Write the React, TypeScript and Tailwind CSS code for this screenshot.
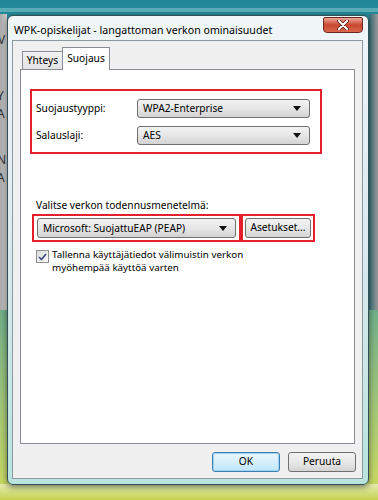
import React from 'react';

const font = { fontFamily: '"Noto Sans", "Open Sans", sans-serif' };

function Combo({ value, className }: { value: string; className: string }) {
  return (
    <div
      className={`flex items-center justify-between rounded-[3px] border border-[#707070] bg-gradient-to-b from-[#f3f3f3] via-[#e6e6e6] to-[#d3d3d3] pl-[5px] pr-[8px] text-[10.2px] text-black ${className}`}
    >
      <span className="leading-none">{value}</span>
      <svg width="8" height="5" viewBox="0 0 8 5">
        <path d="M0 0 L8 0 L4 5 Z" fill="#111" />
      </svg>
    </div>
  );
}

function Button({ label, primary, className }: { label: string; primary?: boolean; className: string }) {
  return (
    <div
      className={`flex items-center justify-center rounded-[3px] border text-[10.2px] text-black ${
        primary
          ? 'border-[#3c7fb1] bg-gradient-to-b from-[#eaf6fd] via-[#d7effc] to-[#bee6fd] shadow-[inset_0_0_0_1px_#9fd3f1]'
          : 'border-[#707070] bg-gradient-to-b from-[#f3f3f3] via-[#e8e8e8] to-[#d4d4d4]'
      } ${className}`}
    >
      {label}
    </div>
  );
}

export default function App() {
  return (
    <div
      className="relative w-[378px] h-[500px] overflow-hidden bg-gradient-to-b from-[#1f8898] via-[#4f9f90] to-[#cfdc5c] pt-[15px] pl-[7px]"
      style={font}
    >
      {/* desktop behind the dialog */}
      <div className="absolute left-0 top-[14px] w-[7px] h-[296px] bg-gradient-to-r from-[#a9a9a9] to-[#cfcfcf] text-[12px] text-[#333] leading-none">
        <span className="absolute left-[-2px] top-[20px]">V</span>
        <span className="absolute left-[-3px] top-[76px]">Y</span>
        <span className="absolute left-[-3px] top-[94px]">A</span>
        <span className="absolute left-[-3px] top-[140px]">N</span>
        <span className="absolute left-[-3px] top-[158px]">A</span>
      </div>
      <div className="absolute right-0 top-[14px] w-[9px] h-[296px] bg-gradient-to-r from-[#2f6f78] to-[#9a9898]" />
      <div className="absolute left-0 right-0 top-[8px] h-[4px] bg-[#7fc3cc] opacity-60" />
      <div className="absolute left-0 right-0 bottom-0 h-[16px] bg-gradient-to-b from-[#e4ecb0] to-[#c4d24a]" />

      {/* dialog window */}
      <div className="relative w-[362px] h-[470px] rounded-[6px] border border-[#33505a] bg-gradient-to-b from-[#f1f6f8] via-[#dbe9f0] to-[#b9e4dc] shadow-[0_2px_6px_rgba(0,0,0,0.5)] flex flex-col">
        {/* title bar */}
        <div className="relative h-[24px] flex items-center pl-[6px] pt-[5px] text-[10.6px] text-black">
          WPK-opiskelijat - langattoman verkon ominaisuudet
          <div className="absolute right-[5px] top-[1px] w-[40px] h-[16px] rounded-b-[4px] rounded-t-[2px] border border-[#6a2a20] bg-gradient-to-b from-[#e9a798] via-[#c9462f] to-[#d9694c] flex items-center justify-center">
            <svg width="12" height="10" viewBox="0 0 12 10">
              <path d="M2 1 L10 9 M10 1 L2 9" stroke="#5a1d14" strokeWidth="3.6" strokeLinecap="round" />
              <path d="M2 1 L10 9 M10 1 L2 9" stroke="#fff" strokeWidth="2" strokeLinecap="round" />
            </svg>
          </div>
        </div>

        {/* client area */}
        <div className="ml-[4px] w-[351px] h-[439px] border border-[#8a9aa0] bg-[#f0f0f0] pl-[7px] pr-[7px] flex flex-col text-[10.2px]">
          {/* tabs */}
          <div className="flex items-end h-[28px] pl-[2px] text-black">
            <div className="w-[40px] h-[18px] border border-b-0 border-r-0 border-[#898c95] bg-gradient-to-b from-[#f2f2f2] to-[#e3e3e3] flex items-center justify-center">
              Yhteys
            </div>
            <div className="relative z-10 w-[48px] h-[23px] -mb-px border border-b-0 border-[#898c95] bg-white flex justify-center pt-[3px]">
              Suojaus
            </div>
          </div>

          {/* tab panel */}
          <div className="h-[375px] border border-[#898c95] bg-white flex flex-col text-black">
            <div className="ml-[9px] mt-[19px] w-[292px] h-[65px] border-2 border-[#e3202b] flex flex-col gap-[8px] pt-[8px] pl-[4px]">
              <div className="flex items-center h-[19px]">
                <span className="w-[101px]">Suojaustyyppi:</span>
                <Combo value="WPA2-Enterprise" className="w-[173px] h-[19px]" />
              </div>
              <div className="flex items-center h-[19px]">
                <span className="w-[101px]">Salauslaji:</span>
                <Combo value="AES" className="w-[173px] h-[19px]" />
              </div>
            </div>

            <div className="ml-[15px] mt-[45px] leading-[13px]">Valitse verkon todennusmenetelmä:</div>

            <div className="flex mt-[2px] ml-[11px]">
              <div className="w-[209px] h-[28px] border-2 border-[#e3202b] p-[2px] pl-[3px]">
                <Combo value="Microsoft: SuojattuEAP (PEAP)" className="w-[199px] h-[20px]" />
              </div>
              <div className="w-[74px] h-[28px] border-2 border-[#e3202b] p-[2px] pl-[2px]">
                <Button label="Asetukset..." className="w-[66px] h-[20px]" />
              </div>
            </div>

            <div className="flex ml-[15px] mt-[6px] gap-[3px] text-[9.8px]">
              <div className="mt-[2px] w-[13px] h-[13px] border border-[#8f8f8f] bg-gradient-to-br from-[#dcdcdc] to-[#fbfbfb] flex items-center justify-center">
                <svg width="9" height="8" viewBox="0 0 9 8">
                  <path d="M1 4 L3.5 6.5 L8 1" stroke="#3a4a7a" strokeWidth="1.6" fill="none" />
                </svg>
              </div>
              <div className="leading-[13px]">
                Tallenna käyttäjätiedot välimuistin verkon
                <br />
                myöhempää käyttöä varten
              </div>
            </div>
          </div>

          {/* buttons */}
          <div className="flex justify-end gap-[8px] mt-[8px] mr-[-1px]">
            <Button label="OK" primary className="w-[68px] h-[20px]" />
            <Button label="Peruuta" className="w-[68px] h-[20px]" />
          </div>
        </div>
      </div>
    </div>
  );
}
